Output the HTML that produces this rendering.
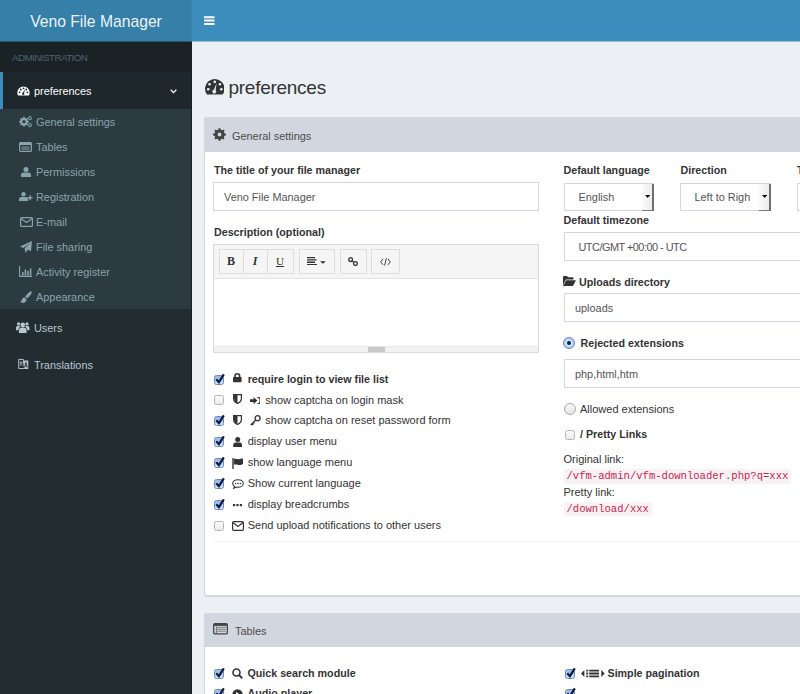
<!DOCTYPE html>
<html><head><meta charset="utf-8">
<style>
*{box-sizing:border-box;margin:0;padding:0}
html,body{width:800px;height:694px;overflow:hidden;background:#ecf0f5;font-family:"Liberation Sans",sans-serif;}
.a{position:absolute;white-space:nowrap}
#hdr{position:absolute;left:0;top:0;width:800px;height:42px;background:linear-gradient(#3c8dbc 41px,rgba(60,141,188,.5) 41px);z-index:5}
#logo{position:absolute;left:0;top:0;width:192px;height:41px;background:linear-gradient(90deg,#367fa9 191px,#3986b3 191px);color:rgba(255,255,255,.93);font-size:15.7px;line-height:44px;text-align:center;overflow:hidden}
#side{position:absolute;left:0;top:41px;width:192px;height:653px;background:#222d32;border-right:1px solid #182024}
.sh{position:absolute;left:0;top:0;width:191px;height:31px;background:#1a2226;color:#4b646f;font-size:9.8px;line-height:33px;padding-left:12px;letter-spacing:-0.55px}
.act{position:absolute;left:0;top:31px;width:191px;height:37px;background:#1e282c;border-left:3px solid #3c8dbc;color:#fff;font-size:10.9px}
.tv{position:absolute;left:0;top:68px;width:191px;height:200px;background:#2c3b41}
.tv .it{position:absolute;left:36px;height:25px;line-height:25px;color:#8aa4af;font-size:10.9px}
.tv .ic{position:absolute;left:19px;top:6px;width:13px;height:13px}
.mi{position:absolute;left:34px;color:#b8c7ce;font-size:10.9px;line-height:20px}
.box{position:absolute;left:204px;width:610px;background:#fff;border:1px solid #d2d6de;border-top:none;border-radius:3px;box-shadow:0 1px 1px rgba(0,0,0,.1)}
.bh{position:absolute;left:-1px;top:0;width:calc(100% + 2px);height:35px;background:#d2d6de;border-radius:3px 3px 0 0}
.bt{position:absolute;left:28px;top:0;line-height:35px;font-size:10.9px;color:#505050}
.lbl{position:absolute;font-weight:bold;font-size:10.7px;color:#333;line-height:14px;white-space:nowrap}
.txt{position:absolute;font-size:11px;color:#333;line-height:14px;white-space:nowrap}
.inp{position:absolute;border:1px solid #d2d6de;background:#fff;height:29px;font-size:10.9px;color:#555;line-height:28.5px;white-space:nowrap;overflow:hidden}
</style></head><body>
<div id="hdr">
  <div id="logo">Veno File Manager</div>
  <svg class="a" style="left:204px;top:16px" width="10.5" height="9" viewBox="0 0 10.5 9"><path d="M0 1.3h10.5M0 4.6h10.5M0 8h10.5" stroke="#fff" stroke-width="2"/></svg>
</div>
<div id="side">
  <div class="sh">ADMINISTRATION</div>
  <div class="act"><span class="a" style="left:31px;top:12px;line-height:14px">preferences</span>
    <svg class="a" style="left:14px;top:14px" width="13" height="10" viewBox="0 0 20 15"><path d="M10 0.5A9.5 9.5 0 0 0 0.5 10c0 1.8.4 3.2 1.2 4.5h16.6c.8-1.3 1.2-2.7 1.2-4.5A9.5 9.5 0 0 0 10 .5z" fill="#fff"/><circle cx="4" cy="9.5" r="1.4" fill="#1e282c"/><circle cx="5.8" cy="5.2" r="1.4" fill="#1e282c"/><circle cx="10" cy="3.4" r="1.4" fill="#1e282c"/><circle cx="14.2" cy="5.2" r="1.4" fill="#1e282c"/><circle cx="16" cy="9.5" r="1.4" fill="#1e282c"/><path d="M12.6 4.5 10.9 10.6a1.8 1.8 0 1 1-1.9-.6z" fill="#1e282c"/></svg>
    <svg class="a" style="left:167.3px;top:17px" width="7" height="5" viewBox="0 0 7 5"><path d="M.7.8 3.5 3.6 6.3.8" fill="none" stroke="#fff" stroke-width="1.3"/></svg>
  </div>
  <div class="tv">
    <div class="it" style="top:1px">General settings</div>
    <div class="it" style="top:26px">Tables</div>
    <div class="it" style="top:51px">Permissions</div>
    <div class="it" style="top:76px">Registration</div>
    <div class="it" style="top:101px">E-mail</div>
    <div class="it" style="top:126px">File sharing</div>
    <div class="it" style="top:151px">Activity register</div>
    <div class="it" style="top:176px">Appearance</div>
    <!-- gears --><svg class="a" style="left:18.6px;top:7px" width="13.5" height="11.5" viewBox="0 0 13.5 11.5"><path fill="#8aa4af" fill-rule="evenodd" d="M8.68 4.75 L9.85 5.01 L9.85 6.39 L8.68 6.65 L8.27 7.63 L8.92 8.64 L7.94 9.62 L6.93 8.97 L5.95 9.38 L5.69 10.55 L4.31 10.55 L4.05 9.38 L3.07 8.97 L2.06 9.62 L1.08 8.64 L1.73 7.63 L1.32 6.65 L0.15 6.39 L0.15 5.01 L1.32 4.75 L1.73 3.77 L1.08 2.76 L2.06 1.78 L3.07 2.43 L4.05 2.02 L4.31 0.85 L5.69 0.85 L5.95 2.02 L6.93 2.43 L7.94 1.78 L8.92 2.76 L8.27 3.77ZM6.60 5.70A1.6 1.6 0 1 0 3.40 5.70A1.6 1.6 0 1 0 6.60 5.70ZM12.50 1.65 L13.15 1.74 L13.15 2.66 L12.50 2.75 L12.23 3.22 L12.47 3.83 L11.68 4.29 L11.27 3.78 L10.73 3.78 L10.32 4.29 L9.53 3.83 L9.77 3.22 L9.50 2.75 L8.85 2.66 L8.85 1.74 L9.50 1.65 L9.77 1.18 L9.53 0.57 L10.32 0.11 L10.73 0.62 L11.27 0.62 L11.68 0.11 L12.47 0.57 L12.23 1.18ZM11.90 2.20A0.9 0.9 0 1 0 10.10 2.20A0.9 0.9 0 1 0 11.90 2.20ZM12.50 8.65 L13.15 8.74 L13.15 9.66 L12.50 9.75 L12.23 10.22 L12.47 10.83 L11.68 11.29 L11.27 10.78 L10.73 10.78 L10.32 11.29 L9.53 10.83 L9.77 10.22 L9.50 9.75 L8.85 9.66 L8.85 8.74 L9.50 8.65 L9.77 8.18 L9.53 7.57 L10.32 7.11 L10.73 7.62 L11.27 7.62 L11.68 7.11 L12.47 7.57 L12.23 8.18ZM11.90 9.20A0.9 0.9 0 1 0 10.10 9.20A0.9 0.9 0 1 0 11.90 9.20Z"/></svg>
    <!-- table -->
    <svg class="a" style="left:19px;top:32.5px" width="13" height="10" viewBox="0 0 13 10"><rect x=".6" y=".6" width="11.8" height="8.8" rx="1" fill="none" stroke="#8aa4af" stroke-width="1.2"/><rect x="1" y="1" width="11" height="2" fill="#8aa4af"/><rect x="2.5" y="4.2" width="8" height="3.8" fill="#8aa4af" opacity=".55"/></svg>
    <!-- user -->
    <svg class="a" style="left:20.5px;top:57.5px" width="10" height="10" viewBox="0 0 10 10"><circle cx="5" cy="2.6" r="2.5" fill="#8aa4af"/><path d="M0 10V8c0-1.7 1.2-2.6 2.5-2.6h5C8.8 5.4 10 6.3 10 8v2z" fill="#8aa4af"/></svg>
    <!-- user plus -->
    <svg class="a" style="left:18.5px;top:83px" width="14" height="9" viewBox="0 0 14 9"><circle cx="4.5" cy="2.3" r="2.2" fill="#8aa4af"/><path d="M0 9V7.2c0-1.5 1-2.3 2.2-2.3h4.6c1.2 0 2.2.8 2.2 2.3V9z" fill="#8aa4af"/><path d="M8.5 5.8h5M11 3.3v5" stroke="#8aa4af" stroke-width="1.4"/></svg>
    <!-- envelope -->
    <svg class="a" style="left:19.5px;top:108px" width="13" height="10" viewBox="0 0 13 10"><rect x=".6" y=".6" width="11.8" height="8.8" rx="1" fill="none" stroke="#8aa4af" stroke-width="1.2"/><path d="M1 1.4 6.5 5.6 12 1.4" fill="none" stroke="#8aa4af" stroke-width="1.2"/></svg>
    <!-- paper plane -->
    <svg class="a" style="left:19.5px;top:131.5px" width="12" height="12" viewBox="0 0 12 12"><path d="M12 0 0 5.5l3.5 1.4L10 2 4.5 7.6l1.2 4.4 1.8-3.2L11 10z" fill="#8aa4af"/></svg>
    <!-- bar chart -->
    <svg class="a" style="left:19px;top:157px" width="13" height="11" viewBox="0 0 13 11"><path d="M.6 0v10.4H13" fill="none" stroke="#8aa4af" stroke-width="1.1"/><path d="M3 6h1.6v3.4H3zM5.6 3.5h1.6v5.9H5.6zM8.2 5h1.6v4.4H8.2zM10.8 2.5h1.6v6.9h-1.6z" fill="#8aa4af"/></svg>
    <!-- paint brush --><svg class="a" style="left:19.5px;top:182px" width="12.5" height="12.5" viewBox="0 0 12.5 12.5"><path d="M11.2.3c1.1.4.3 2.6-1.6 4.8L7.2 7.4 5.2 5.6 7.4 3.1C9.3 1 10.6.1 11.2.3z" fill="#8aa4af"/><path d="M4.4 6.3 6.5 8.2c.1 2-1.4 3.7-3.6 3.7C1.8 11.9.8 11.4.3 10.8 1.7 10.2 1.6 9 2.4 7.6 2.9 6.8 3.6 6.4 4.4 6.3z" fill="#8aa4af"/></svg>
  </div>
  <div class="mi" style="top:277px">Users</div>
  <svg class="a" style="left:16px;top:280.5px" width="13.5" height="11.5" viewBox="0 0 14 12"><circle cx="7" cy="3" r="2.4" fill="#b8c7ce"/><circle cx="2.6" cy="2" r="1.7" fill="#b8c7ce"/><circle cx="11.4" cy="2" r="1.7" fill="#b8c7ce"/><path d="M3 12V9c0-2 1.4-3.3 3-3.3h2c1.6 0 3 1.3 3 3.3v3z" fill="#b8c7ce"/><path d="M0 8.5V6.3c0-1.3.8-2 1.8-2h1.8c.5 0 1 .2 1.3.5C3.4 5.5 2.4 6.8 2.4 8.5z M14 8.5V6.3c0-1.3-.8-2-1.8-2h-1.8c-.5 0-1 .2-1.3.5 1.5.7 2.5 2 2.5 3.7z" fill="#b8c7ce"/></svg>
  <div class="mi" style="top:314px">Translations</div>
  <svg class="a" style="left:18px;top:317px" width="11" height="11.5" viewBox="0 0 11 12"><path d="M.5 1.5h5l1 9.5h-6z" fill="none" stroke="#b8c7ce" stroke-width="1"/><path d="M5 2.5h5.5v9h-4z" fill="#b8c7ce"/><path d="M6.6 10 8 4.5 9.4 10M7 8.3h2" fill="none" stroke="#222d32" stroke-width=".9"/><path d="M1.5 4.5h3M3 3.5v1M2 5c.3 1.5 1.3 2.3 2.5 2.8M4 5c-.3 1.5-1.2 2.3-2.3 2.8" fill="none" stroke="#b8c7ce" stroke-width=".8"/></svg>
</div>

<svg class="a" style="left:204.5px;top:79px" width="19.5" height="15.8" viewBox="0 0 19.5 15.8"><path d="M1.95 15.6A9.75 9.75 0 1 1 17.55 15.6Z" fill="#333"/><circle cx="3.2" cy="10.2" r="1.3" fill="#ecf0f5"/><circle cx="4.6" cy="5.2" r="1.3" fill="#ecf0f5"/><circle cx="9.75" cy="2.9" r="1.3" fill="#ecf0f5"/><circle cx="14.9" cy="5.2" r="1.3" fill="#ecf0f5"/><circle cx="16.3" cy="10.2" r="1.3" fill="#ecf0f5"/><path d="M11.6 4.6 10.6 11.2a1.9 1.9 0 1 1-1.8-.4z" fill="#ecf0f5"/></svg>
<div class="a" style="left:228.5px;top:75.5px;font-size:19px;letter-spacing:-0.27px;color:#333;line-height:24px">preferences</div>
<div class="box" style="top:117px;height:479px"><div class="bh"></div></div>
<svg class="a" style="left:213.2px;top:128.1px" width="13" height="13" viewBox="0 0 13 13"><path fill="#444" fill-rule="evenodd" d="M11.34 5.25 L12.84 5.60 L12.84 7.40 L11.34 7.75 L10.81 9.04 L11.62 10.34 L10.34 11.62 L9.04 10.81 L7.75 11.34 L7.40 12.84 L5.60 12.84 L5.25 11.34 L3.96 10.81 L2.66 11.62 L1.38 10.34 L2.19 9.04 L1.66 7.75 L0.16 7.40 L0.16 5.60 L1.66 5.25 L2.19 3.96 L1.38 2.66 L2.66 1.38 L3.96 2.19 L5.25 1.66 L5.60 0.16 L7.40 0.16 L7.75 1.66 L9.04 2.19 L10.34 1.38 L11.62 2.66 L10.81 3.96ZM8.40 6.50A1.9 1.9 0 1 0 4.60 6.50A1.9 1.9 0 1 0 8.40 6.50Z"/></svg>
<div class="a" style="left:232px;top:129px;line-height:14px;font-size:10.9px;color:#4d4d4d">General settings</div>
<div class="lbl" style="left:214px;top:163.2px">The title of your file manager</div>
<div class="inp" style="left:213px;top:182px;width:326px;padding-left:10px">Veno File Manager</div>
<div class="lbl" style="left:214px;top:225.3px">Description (optional)</div>
<div class="a" style="left:213px;top:244px;width:326px;height:109px;border:1px solid #dcdcdc;background:#fff"></div>
<div class="a" style="left:214px;top:245px;width:324px;height:34px;background:#f5f5f5;border-bottom:1px solid #e3e3e3"></div>
<div class="a" style="left:214px;top:346px;width:324px;height:6px;background:#f2f2f2;border-top:1px solid #e8e8e8"></div>
<div class="a" style="left:368px;top:347px;width:17px;height:5px;background:#c8c8c8"></div>
<div style="position:absolute;top:249px;height:25px;background:#f5f5f5;border:1px solid #dedede;left:219px;width:25px"></div>
<div style="position:absolute;top:249px;height:25px;background:#f5f5f5;border:1px solid #dedede;left:243px;width:25px"></div>
<div style="position:absolute;top:249px;height:25px;background:#f5f5f5;border:1px solid #dedede;left:267px;width:27px"></div>
<div style="position:absolute;top:249px;height:25px;background:#f5f5f5;border:1px solid #dedede;left:299px;width:36px"></div>
<div style="position:absolute;top:249px;height:25px;background:#f5f5f5;border:1px solid #dedede;left:340px;width:27px"></div>
<div style="position:absolute;top:249px;height:25px;background:#f5f5f5;border:1px solid #dedede;left:371px;width:29px"></div>
<div class="a" style="left:227px;top:254px;font-family:'Liberation Serif';font-weight:bold;font-size:12px;line-height:14px;color:#333">B</div>
<div class="a" style="left:252.7px;top:254px;font-family:'Liberation Serif';font-style:italic;font-weight:bold;font-size:12px;line-height:14px;color:#333">I</div>
<div class="a" style="left:276px;top:254px;font-family:'Liberation Serif';font-size:11px;line-height:14px;color:#333;text-decoration:underline">U</div>
<svg class="a" style="left:306.7px;top:257px" width="19" height="8.2" viewBox="0 0 19 8.2"><path d="M0 0h8v1.3H0zM0 2.3h9.5v1.3H0zM0 4.6h8v1.3H0zM0 6.9h10v1.3H0zM13 4.2h5.8l-2.9 2.6z" fill="#333"/></svg>
<svg class="a" style="left:348.3px;top:256.6px" width="10" height="9.2" viewBox="0 0 10 9.2"><circle cx="2.6" cy="2.6" r="1.9" fill="none" stroke="#333" stroke-width="1.3"/><circle cx="7.4" cy="6.6" r="1.9" fill="none" stroke="#333" stroke-width="1.3"/><path d="M4 3.8 6 5.4" stroke="#333" stroke-width="1.2"/></svg>
<svg class="a" style="left:380.3px;top:258px" width="11" height="7.8" viewBox="0 0 11 7.8"><path d="M3 .9.7 3.9 3 6.9M8 .9l2.3 3L8 6.9M6.4.2 4.6 7.6" fill="none" stroke="#444" stroke-width="1"/></svg>
<div class="a" style="left:214px;top:374.5px;width:10px;height:10px;border:1px solid #7286bb;border-radius:2.5px;background:linear-gradient(#93b6ee,#c6eafd)"></div><svg class="a" style="left:215px;top:372.5px" width="10" height="12" viewBox="0 0 10 12"><path d="M1.3 6.2 3.9 9.2 8.8 1.3" fill="none" stroke="#10193a" stroke-width="2.2"/></svg>
<svg class="a" style="left:233.3px;top:373.4px" width="8.6" height="9.2" viewBox="0 0 8.6 9.2"><path d="M2 4.2V3.1a2.3 2.3 0 0 1 4.6 0v1.1" fill="none" stroke="#333" stroke-width="1.6"/><rect x="0" y="3.9" width="8.6" height="5.3" rx=".9" fill="#333"/></svg>
<div class="lbl" style="left:247.7px;top:371.6px">require login to view file list</div>
<div class="a" style="left:214px;top:395.4px;width:10px;height:10px;border:1px solid #b4b4b4;border-radius:2.5px;background:linear-gradient(#fafafa,#ececec)"></div>
<svg class="a" style="left:233px;top:394.4px" width="9" height="9.6" viewBox="0 0 9 9.6"><path d="M.6.6h7.8v4c0 2.6-2 4.1-3.9 4.9C2.6 8.7.6 7.2.6 4.6z" fill="none" stroke="#333" stroke-width="1.2"/><path d="M1 1h3.5v8.2C2.7 8.4 1 7 1 4.6z" fill="#333"/></svg>
<svg class="a" style="left:249.8px;top:396.6px" width="10.6" height="7.2" viewBox="0 0 10.6 7.2"><path d="M0 2.3h3.6V0l3.8 3.6-3.8 3.6V4.9H0z" fill="#333"/><path d="M7.4.6h1.3c.9 0 1.3.5 1.3 1.3v3.4c0 .8-.4 1.3-1.3 1.3H7.4" fill="none" stroke="#333" stroke-width="1.2"/></svg>
<div class="txt" style="left:265.3px;top:392.5px">show captcha on login mask</div>
<div class="a" style="left:214px;top:416.2px;width:10px;height:10px;border:1px solid #7286bb;border-radius:2.5px;background:linear-gradient(#93b6ee,#c6eafd)"></div><svg class="a" style="left:215px;top:414.2px" width="10" height="12" viewBox="0 0 10 12"><path d="M1.3 6.2 3.9 9.2 8.8 1.3" fill="none" stroke="#10193a" stroke-width="2.2"/></svg>
<svg class="a" style="left:233px;top:415.3px" width="9" height="9.6" viewBox="0 0 9 9.6"><path d="M.6.6h7.8v4c0 2.6-2 4.1-3.9 4.9C2.6 8.7.6 7.2.6 4.6z" fill="none" stroke="#333" stroke-width="1.2"/><path d="M1 1h3.5v8.2C2.7 8.4 1 7 1 4.6z" fill="#333"/></svg>
<svg class="a" style="left:249.8px;top:415px" width="10.8" height="10.5" viewBox="0 0 10.8 10.5"><circle cx="7.6" cy="3.2" r="2.5" fill="none" stroke="#333" stroke-width="1.3"/><path d="M5.8 5 .7 10M2 8.7l1.3 1.3M3.3 7.4l1.1 1.1" stroke="#333" stroke-width="1.3"/></svg>
<div class="txt" style="left:265.3px;top:413.3px">show captcha on reset password form</div>
<div class="a" style="left:214px;top:437.1px;width:10px;height:10px;border:1px solid #7286bb;border-radius:2.5px;background:linear-gradient(#93b6ee,#c6eafd)"></div><svg class="a" style="left:215px;top:435.1px" width="10" height="12" viewBox="0 0 10 12"><path d="M1.3 6.2 3.9 9.2 8.8 1.3" fill="none" stroke="#10193a" stroke-width="2.2"/></svg>
<svg class="a" style="left:232.8px;top:436.9px" width="9.4" height="10" viewBox="0 0 9 10"><circle cx="4.5" cy="2.5" r="2.5" fill="#333"/><path d="M0 10V8.2C0 6.6 1.2 5.6 2.5 5.6h4C7.8 5.6 9 6.6 9 8.2V10z" fill="#333"/></svg>
<div class="txt" style="left:247.7px;top:434.2px">display user menu</div>
<div class="a" style="left:214px;top:458.0px;width:10px;height:10px;border:1px solid #7286bb;border-radius:2.5px;background:linear-gradient(#93b6ee,#c6eafd)"></div><svg class="a" style="left:215px;top:456.0px" width="10" height="12" viewBox="0 0 10 12"><path d="M1.3 6.2 3.9 9.2 8.8 1.3" fill="none" stroke="#10193a" stroke-width="2.2"/></svg>
<svg class="a" style="left:232px;top:457.5px" width="11" height="11" viewBox="0 0 11 11"><path d="M1 0v11" stroke="#333" stroke-width="1.4"/><path d="M2 1c2-1 3.5 1 5.5 0S10.5.5 11 .5v5.5c-1 .5-2 1-3.5 1S4 6 2 6.6z" fill="#333"/></svg>
<div class="txt" style="left:247.7px;top:455.1px">show language menu</div>
<div class="a" style="left:214px;top:478.9px;width:10px;height:10px;border:1px solid #7286bb;border-radius:2.5px;background:linear-gradient(#93b6ee,#c6eafd)"></div><svg class="a" style="left:215px;top:476.9px" width="10" height="12" viewBox="0 0 10 12"><path d="M1.3 6.2 3.9 9.2 8.8 1.3" fill="none" stroke="#10193a" stroke-width="2.2"/></svg>
<svg class="a" style="left:231.5px;top:478.9px" width="12" height="10" viewBox="0 0 12 10"><path d="M6 .7C3 .7.7 2.4.7 4.5c0 1.2.7 2.2 1.8 2.9L1.7 9.3 4.4 8c.5.1 1 .2 1.6.2 3 0 5.3-1.7 5.3-3.8S9 .7 6 .7z" fill="none" stroke="#333" stroke-width="1.1"/><circle cx="3.6" cy="4.5" r=".8" fill="#333"/><circle cx="6" cy="4.5" r=".8" fill="#333"/><circle cx="8.4" cy="4.5" r=".8" fill="#333"/></svg>
<div class="txt" style="left:247.7px;top:476.0px">Show current language</div>
<div class="a" style="left:214px;top:499.7px;width:10px;height:10px;border:1px solid #7286bb;border-radius:2.5px;background:linear-gradient(#93b6ee,#c6eafd)"></div><svg class="a" style="left:215px;top:497.7px" width="10" height="12" viewBox="0 0 10 12"><path d="M1.3 6.2 3.9 9.2 8.8 1.3" fill="none" stroke="#10193a" stroke-width="2.2"/></svg>
<svg class="a" style="left:233px;top:503.7px" width="9" height="3" viewBox="0 0 9 3"><rect x="0" y="0" width="2.2" height="2.2" fill="#333"/><rect x="3.4" y="0" width="2.2" height="2.2" fill="#333"/><rect x="6.8" y="0" width="2.2" height="2.2" fill="#333"/></svg>
<div class="txt" style="left:247.7px;top:496.8px">display breadcrumbs</div>
<div class="a" style="left:214px;top:520.6px;width:10px;height:10px;border:1px solid #b4b4b4;border-radius:2.5px;background:linear-gradient(#fafafa,#ececec)"></div>
<svg class="a" style="left:231.5px;top:520.6px" width="12" height="10" viewBox="0 0 12 10"><rect x=".6" y=".6" width="10.8" height="8.8" rx="1.2" fill="none" stroke="#333" stroke-width="1.2"/><path d="M1 1.5 6 5.5l5-4" fill="none" stroke="#333" stroke-width="1.2"/></svg>
<div class="txt" style="left:247.7px;top:517.7px">Send upload notifications to other users</div>
<div class="a" style="left:213px;top:541px;width:600px;height:1px;background:#f4f4f4"></div>
<div class="lbl" style="left:563.5px;top:163.2px">Default language</div>
<div class="lbl" style="left:680.5px;top:163.2px">Direction</div>
<div class="lbl" style="left:797px;top:163.2px">Time</div>
<div class="a" style="left:564px;top:183px;width:90px;height:27.5px;border:1px solid #d2d6de;border-right:none;background:#fff"></div><div class="a" style="left:578.5px;top:189.5px;font-size:10.9px;line-height:14px;color:#555">English</div><div class="a" style="left:642.4px;top:183.5px;width:11.6px;height:27px;background:linear-gradient(90deg,#fbfbfb,#ececec);border-right:2px solid #707070;border-bottom:1.5px solid #7a7a7a"></div><svg class="a" style="left:645.0px;top:195px" width="5.3" height="3" viewBox="0 0 5.3 3"><path d="M0 0h5.3L2.65 3z" fill="#111"/></svg><div class="a" style="left:680px;top:183px;width:91px;height:27.5px;border:1px solid #d2d6de;border-right:none;background:#fff"></div><div class="a" style="left:694.5px;top:189.5px;font-size:10.9px;line-height:14px;color:#555">Left to Righ</div><div class="a" style="left:759.4px;top:183.5px;width:11.6px;height:27px;background:linear-gradient(90deg,#fbfbfb,#ececec);border-right:2px solid #707070;border-bottom:1.5px solid #7a7a7a"></div><svg class="a" style="left:762.0px;top:195px" width="5.3" height="3" viewBox="0 0 5.3 3"><path d="M0 0h5.3L2.65 3z" fill="#111"/></svg><div class="a" style="left:797px;top:183px;width:40px;height:28px;border:1px solid #d2d6de;background:#fff"></div>
<div class="lbl" style="left:563.5px;top:213.2px">Default timezone</div>
<div class="inp" style="left:564px;top:232px;width:260px;padding-left:13.5px;letter-spacing:-0.5px">UTC/GMT +00:00 - UTC</div>
<svg class="a" style="left:562.5px;top:276px" width="13" height="10" viewBox="0 0 13 10"><path d="M0 1c0-.5.4-1 1-1h3l1 1.2h4.5c.5 0 1 .4 1 1V3.5H3L0 9z" fill="#333"/><path d="M3.2 4.3H13L10 10H0z" fill="#333"/></svg>
<div class="lbl" style="left:579px;top:275px">Uploads directory</div>
<div class="inp" style="left:564px;top:293px;width:260px;padding-left:10px">uploads</div>
<div class="a" style="left:563.3px;top:336.6px;width:12px;height:12px;border-radius:50%;border:1px solid #6a7fbd;background:radial-gradient(#c9ecfd 30%,#8fb3ec)"></div>
<div class="a" style="left:567.3px;top:340.6px;width:4px;height:4px;border-radius:50%;background:#10193a"></div>
<div class="lbl" style="left:580.5px;top:336.2px">Rejected extensions</div>
<div class="inp" style="left:564px;top:359px;width:260px;padding-left:10px">php,html,htm</div>
<div class="a" style="left:563.5px;top:403px;width:12px;height:12px;border-radius:50%;border:1px solid #a9a9a9;background:linear-gradient(#fafafa,#e4e4e4)"></div>
<div class="txt" style="left:580px;top:401.7px">Allowed extensions</div>
<div class="a" style="left:565px;top:430px;width:10px;height:10px;border:1px solid #b4b4b4;border-radius:2.5px;background:linear-gradient(#fafafa,#ececec)"></div>
<div class="lbl" style="left:580px;top:427.2px">/ Pretty Links</div>
<div class="txt" style="left:563.5px;top:452.2px">Original link:</div>
<div class="a" style="left:564px;top:469px;width:227px;height:15px;background:#f9f2f4;border-radius:2px"></div>
<div class="a" style="left:566.5px;top:469px;font-family:'Liberation Mono';font-size:10.57px;line-height:15px;color:#c7254e">/vfm-admin/vfm-downloader.php?q=xxx</div>
<div class="txt" style="left:563.5px;top:485px">Pretty link:</div>
<div class="a" style="left:564px;top:502px;width:87.5px;height:14px;background:#f9f2f4;border-radius:2px"></div>
<div class="a" style="left:566.5px;top:501.5px;font-family:'Liberation Mono';font-size:10.57px;line-height:15px;color:#c7254e">/download/xxx</div>
<div class="box" style="top:613px;height:200px"><div class="bh" style="height:34px"></div></div>
<svg class="a" style="left:213.2px;top:623.2px" width="15" height="11.6" viewBox="0 0 15 11.6"><rect x=".65" y=".65" width="13.7" height="10.3" rx="1.3" fill="none" stroke="#444" stroke-width="1.3"/><rect x="1" y="1" width="13" height="1.9" fill="#444"/><path d="M3.4 3.5v6.6" stroke="#666" stroke-width=".9"/><path d="M4.2 4.4h8.6M4.2 6.3h8.6M4.2 8.2h8.6" stroke="#777" stroke-width=".9"/></svg>
<div class="a" style="left:235px;top:624px;line-height:14px;font-size:10.9px;color:#4d4d4d">Tables</div>
<div class="a" style="left:214px;top:669.2px;width:10px;height:10px;border:1px solid #7286bb;border-radius:2.5px;background:linear-gradient(#93b6ee,#c6eafd)"></div><svg class="a" style="left:215px;top:667.2px" width="10" height="12" viewBox="0 0 10 12"><path d="M1.3 6.2 3.9 9.2 8.8 1.3" fill="none" stroke="#10193a" stroke-width="2.2"/></svg>
<svg class="a" style="left:232px;top:667.9px" width="11" height="11" viewBox="0 0 11 11"><circle cx="4.5" cy="4.5" r="3.5" fill="none" stroke="#333" stroke-width="1.6"/><path d="M7 7l3.3 3.3" stroke="#333" stroke-width="1.8"/></svg>
<div class="lbl" style="left:247.5px;top:665.5px">Quick search module</div>
<div class="a" style="left:564.5px;top:669.2px;width:10px;height:10px;border:1px solid #7286bb;border-radius:2.5px;background:linear-gradient(#93b6ee,#c6eafd)"></div><svg class="a" style="left:565.5px;top:667.2px" width="10" height="12" viewBox="0 0 10 12"><path d="M1.3 6.2 3.9 9.2 8.8 1.3" fill="none" stroke="#10193a" stroke-width="2.2"/></svg>
<svg class="a" style="left:580.5px;top:669px" width="24" height="9" viewBox="0 0 24 9"><path d="M3.4 1v7L0 4.5z" fill="#333"/><path d="M5.2 .8h2v1.8h-2zM8.2 .8H18v1.8H8.2zM5.2 3.6h2v1.8h-2zM8.2 3.6H18v1.8H8.2zM5.2 6.4h2v1.8h-2zM8.2 6.4H18v1.8H8.2z" fill="#333"/><path d="M20.3 1v7l3.4-3.5z" fill="#333"/></svg>
<div class="lbl" style="left:607.5px;top:665.5px">Simple pagination</div>
<div class="a" style="left:214px;top:689.3px;width:10px;height:10px;border:1px solid #7286bb;border-radius:2.5px;background:linear-gradient(#93b6ee,#c6eafd)"></div><svg class="a" style="left:215px;top:687.3px" width="10" height="12" viewBox="0 0 10 12"><path d="M1.3 6.2 3.9 9.2 8.8 1.3" fill="none" stroke="#10193a" stroke-width="2.2"/></svg>
<svg class="a" style="left:232px;top:688.77px" width="11" height="11" viewBox="0 0 11 11"><circle cx="5.5" cy="5.5" r="5.2" fill="#333"/><path d="M4 3v5l4-2.5z" fill="#fff"/></svg>
<div class="lbl" style="left:247.5px;top:686.4px">Audio player</div>
<div class="a" style="left:564.5px;top:689.3px;width:10px;height:10px;border:1px solid #7286bb;border-radius:2.5px;background:linear-gradient(#93b6ee,#c6eafd)"></div><svg class="a" style="left:565.5px;top:687.3px" width="10" height="12" viewBox="0 0 10 12"><path d="M1.3 6.2 3.9 9.2 8.8 1.3" fill="none" stroke="#10193a" stroke-width="2.2"/></svg>
</body></html>
